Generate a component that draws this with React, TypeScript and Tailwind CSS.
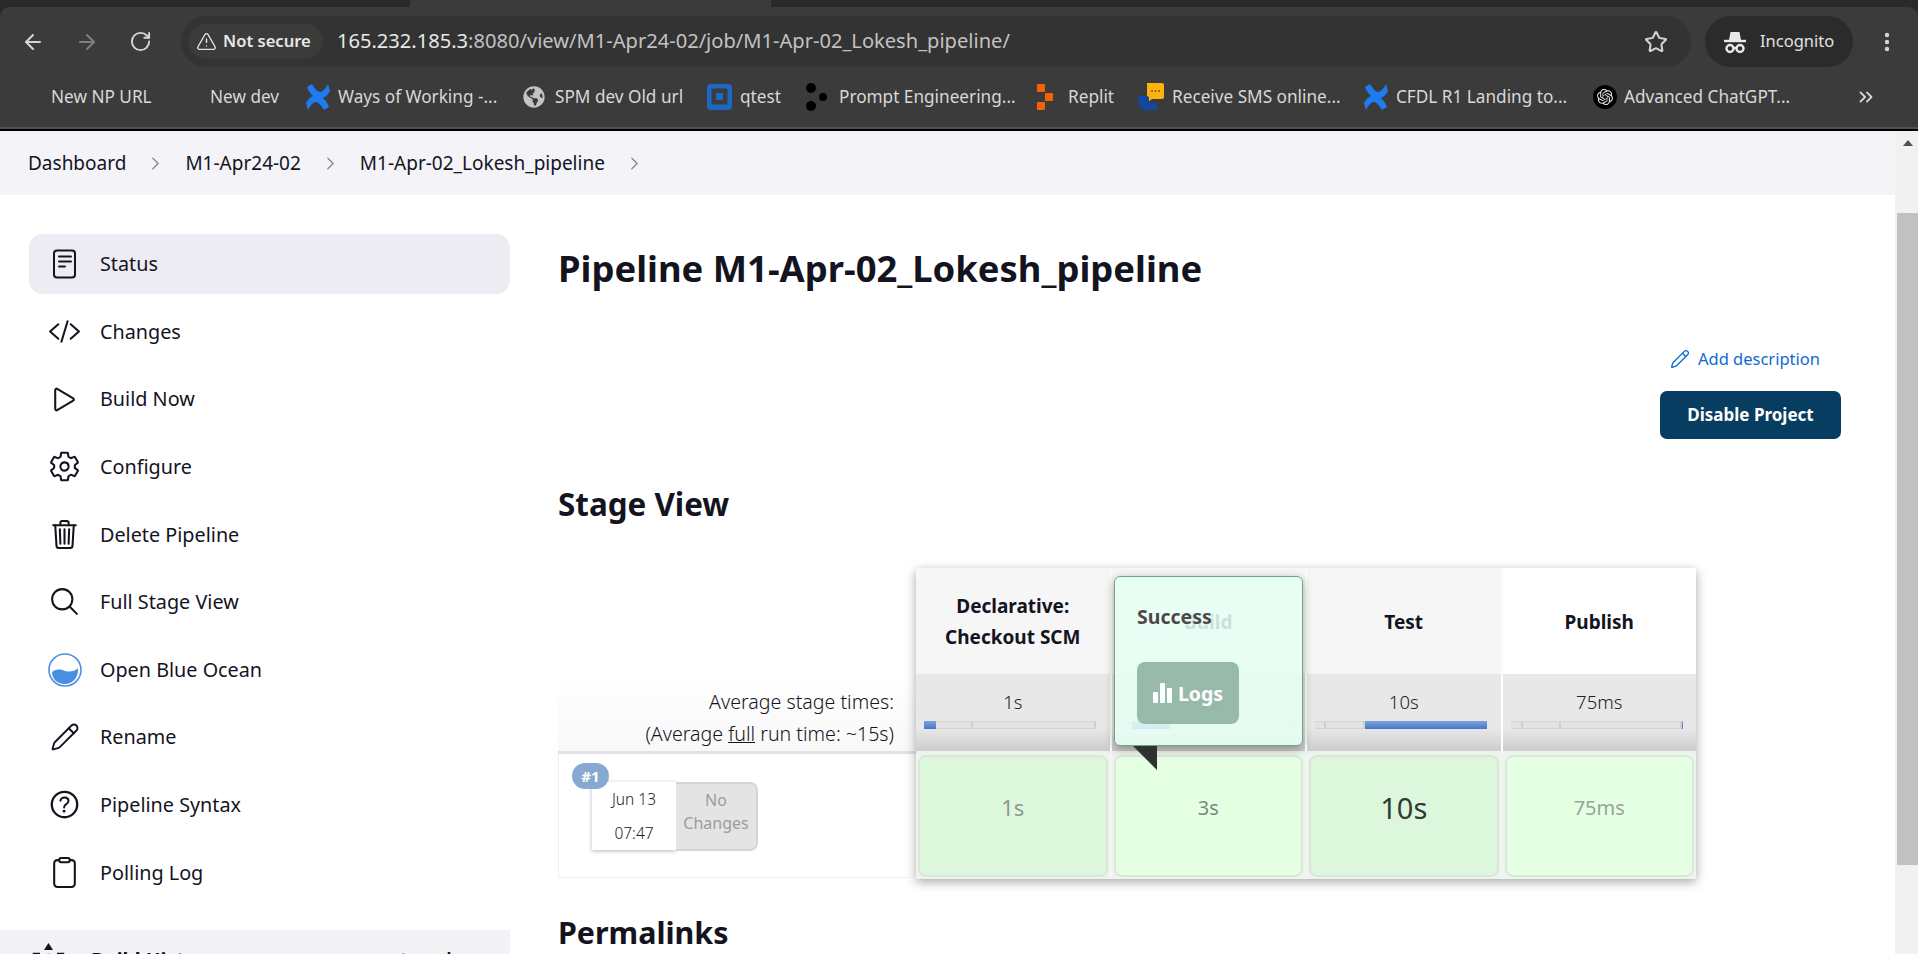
import React from 'react';
import { ArrowLeft, ArrowRight, RotateCw, TriangleAlert, Star, EllipsisVertical, ChevronsRight, ChevronRight, Pencil } from 'lucide-react';
import {
    IoCodeSlashOutline,
    IoPlayOutline,
    IoSettingsOutline,
    IoTrashOutline,
    IoSearchOutline,
    IoHelpCircleOutline,
    IoClipboardOutline,
} from 'react-icons/io5';
import { FaGlobeAmericas } from 'react-icons/fa';
import { SiOpenai } from 'react-icons/si';

const ConfluenceIcon = () => (
    <svg width="24" height="28" viewBox="0 0 24 28" fill="#1e7bf2">
        <path d="M1 4 6 1c3 5 6 8 8 8 3 0 6-4 8-8l2 7c-3 6-8 8-11 8C8 15 3 10 1 4z" />
        <path d="M1 4 6 1c3 5 6 8 8 8 3 0 6-4 8-8l2 7c-3 6-8 8-11 8C8 15 3 10 1 4z" transform="rotate(180 12 14)" />
    </svg>
);

const QtestIcon = () => (
    <svg width="25" height="26" viewBox="0 0 25 26">
        <rect width="25" height="26" rx="4" fill="#1c68c4" />
        <path d="M21 21V6a2 2 0 0 0-2-2H6a2 2 0 0 0-2 2v13a2 2 0 0 0 2 2h15" fill="#3b3b3b" stroke="#1c68c4" strokeWidth="1" />
        <rect x="9" y="9" width="7" height="7" fill="#1c68c4" />
    </svg>
);

const DotsIcon = () => (
    <svg width="22" height="28" viewBox="0 0 22 28" fill="#000">
        <circle cx="6" cy="5" r="5" />
        <circle cx="6" cy="23" r="5" />
        <circle cx="18" cy="14" r="4" />
    </svg>
);

const ReplitIcon = () => (
    <svg width="16" height="26" viewBox="0 0 16 26" fill="#f26207">
        <rect x="0" y="0" width="8" height="8" rx="1" />
        <rect x="8" y="9" width="8" height="8" rx="1" />
        <rect x="0" y="18" width="8" height="8" rx="1" />
    </svg>
);

const SmsIcon = () => (
    <svg width="26" height="28" viewBox="0 0 26 28">
        <path d="M9 0h15a2 2 0 0 1 2 2v12a2 2 0 0 1-2 2H14l-5 4z" fill="#fdb212" />
        <circle cx="14" cy="8" r="1" fill="#7a5600" />
        <circle cx="17.5" cy="8" r="1" fill="#7a5600" />
        <circle cx="21" cy="8" r="1" fill="#7a5600" />
        <rect x="0" y="13" width="11" height="9" rx="2" fill="#13479f" />
        <rect x="3" y="20" width="16" height="7" fill="#13479f" />
    </svg>
);

const IncognitoIcon = () => (
    <svg width="24" height="24" viewBox="0 0 24 24" fill="none" stroke="#e8e8e8" strokeWidth="2.4">
        <path d="M6 10 7.5 2h9L18 10z" fill="#e8e8e8" stroke="none" />
        <path d="M1 11h22" />
        <circle cx="7" cy="18.5" r="3.5" />
        <circle cx="17" cy="18.5" r="3.5" />
        <path d="M10.5 18h3" />
    </svg>
);

const StatusIcon = () => (
    <svg width="25" height="30" viewBox="0 0 25 30" fill="none" stroke="#14141f" strokeWidth="2" strokeLinecap="round">
        <rect x="2" y="1.5" width="21" height="27" rx="3" />
        <path d="M7 7.5h12M7 12.5h12M7 17.5h6" />
    </svg>
);

const OceanIcon = () => (
    <svg width="34" height="34" viewBox="0 0 34 34">
        <circle cx="17" cy="17" r="16" fill="#fff" stroke="#4a90e2" strokeWidth="1.6" />
        <path d="M4 19c4-3 8-3 13-1 4 1 9 1 13-3 1 9-5 16-13 16S4 26 4 19z" fill="#4a90e2" />
    </svg>
);

const BarsIcon = () => (
    <svg width="19" height="20" viewBox="0 0 19 20" fill="#fff">
        <rect x="0" y="9" width="5" height="11" rx="1" />
        <rect x="7" y="0" width="5" height="20" rx="1" />
        <rect x="14" y="5" width="5" height="15" rx="1" />
    </svg>
);

const HistoryIcon = () => (
    <svg width="33" height="24" viewBox="0 0 33 24" fill="none" stroke="#14141f" strokeWidth="2.4">
        <polygon points="16.5,0 21,7 12,7" fill="#14141f" stroke="none" />
        <path d="M8 11H2v12M25 11h6v12" />
        <circle cx="16.5" cy="20" r="8" />
    </svg>
);

const bookmarks = [
    { label: 'New NP URL', icon: null, cls: 'w-[210px] pl-[51px]' },
    { label: 'New dev', icon: null, cls: 'w-[96px]' },
    { label: 'Ways of Working -...', icon: <ConfluenceIcon />, cls: 'w-[217px] gap-[8px]' },
    { label: 'SPM dev Old url', icon: <FaGlobeAmericas size={22} color="#c4c4c4" />, cls: 'w-[184px] gap-[10px]' },
    { label: 'qtest', icon: <QtestIcon />, cls: 'w-[98px] gap-[8px]' },
    { label: 'Prompt Engineering...', icon: <DotsIcon />, cls: 'w-[232px] gap-[12px]' },
    { label: 'Replit', icon: <ReplitIcon />, cls: 'w-[101px] gap-[15px]' },
    { label: 'Receive SMS online...', icon: <SmsIcon />, cls: 'w-[226px] gap-[8px]' },
    { label: 'CFDL R1 Landing to...', icon: <ConfluenceIcon />, cls: 'w-[229px] gap-[8px]' },
];

const navItems = [
    { label: 'Status', icon: <StatusIcon />, active: true },
    { label: 'Changes', icon: <IoCodeSlashOutline size={33} /> },
    { label: 'Build Now', icon: <IoPlayOutline size={33} /> },
    { label: 'Configure', icon: <IoSettingsOutline size={33} /> },
    { label: 'Delete Pipeline', icon: <IoTrashOutline size={33} /> },
    { label: 'Full Stage View', icon: <IoSearchOutline size={33} /> },
    { label: 'Open Blue Ocean', icon: <OceanIcon /> },
    { label: 'Rename', icon: <Pencil size={30} strokeWidth={1.5} /> },
    { label: 'Pipeline Syntax', icon: <IoHelpCircleOutline size={37} /> },
    { label: 'Polling Log', icon: <IoClipboardOutline size={33} /> },
];

// widths in px of each piece of the little timing bar
const stages = [
    {
        name: ['Declarative:', 'Checkout SCM'],
        avg: '1s',
        headBg: 'bg-[#f6f6f6]',
        bar: [{ w: 12, blue: true }, { w: 37 }, { w: 123 }],
        cell: '1s',
        cellBg: 'bg-[#ddf7dc]',
        cellText: 'text-[22px] text-[#8a9a8c]',
    },
    {
        name: ['Build'],
        avg: '3s',
        headBg: 'bg-[#f6f6f6]',
        bar: [{ w: 12 }, { w: 38, blue: true }, { w: 122 }],
        cell: '3s',
        cellBg: 'bg-[#e5ffe3]',
        cellText: 'text-[20px] text-[#7b8a7d]',
    },
    {
        name: ['Test'],
        avg: '10s',
        headBg: 'bg-[#f6f6f6]',
        bar: [{ w: 11 }, { w: 39 }, { w: 122, blue: true }],
        cell: '10s',
        cellBg: 'bg-[#ddf7dc]',
        cellText: 'text-[29px] text-[#333a35]',
    },
    {
        name: ['Publish'],
        avg: '75ms',
        headBg: 'bg-white',
        bar: [{ w: 12 }, { w: 38 }, { w: 121 }, { w: 1, blue: true }],
        cell: '75ms',
        cellBg: 'bg-[#e5ffe3]',
        cellText: 'text-[20px] text-[#97a698]',
    },
];

const TimingBar = ({ parts }: { parts: { w: number; blue?: boolean }[] }) => (
    <div className="flex h-[8px] w-[172px] bg-[#e2e2e2]">
        {parts.map((p, i) => (
            <div
                key={i}
                style={{ width: p.w }}
                className={
                    p.blue
                        ? 'h-full bg-gradient-to-b from-[#7ea3dc] to-[#4674c8]'
                        : 'h-full bg-[#e2e2e2] border-y border-[#d4d4d4] border-r-2 border-r-[#cfcfcf]'
                }
            />
        ))}
    </div>
);

const Crumb = () => <ChevronRight className="mx-[19px]" size={21} color="#85858d" strokeWidth={1.5} />;

const BrowserChrome = () => (
    <div className="shrink-0 bg-[#292929] text-[#e4e4e4]">
        <div className="h-[7px] flex">
            <div className="ml-[410px] w-[361px] bg-[#3b3b3b]" />
        </div>
        <div className="h-[120px] bg-[#3b3b3b] rounded-t-[10px]">
            <div className="flex items-center h-[60px] pt-[9px]">
                <div className="flex items-center w-[181px] pl-[21px] gap-[30px]">
                    <ArrowLeft size={24} color="#d6d6d6" strokeWidth={2} />
                    <ArrowRight size={24} color="#7f7f7f" strokeWidth={2} />
                    <RotateCw size={23} color="#d6d6d6" strokeWidth={2} />
                </div>
                <div className="flex items-center w-[1510px] h-[51px] rounded-full bg-[#333333] pl-[7px] pr-[23px]">
                    <div className="flex items-center gap-[6px] h-[35px] w-[135px] pl-[8px] rounded-full bg-[#3b3b3b] shrink-0">
                        <TriangleAlert size={21} color="#e4e4e4" strokeWidth={1.6} />
                        <span className="text-[16.6px] font-semibold text-[#e8e8e8] whitespace-nowrap">Not secure</span>
                    </div>
                    <div className="ml-[14px] flex-1 text-[20.1px] text-[#e8e8e8]">
                        165.232.185.3<span className="text-[#c2c2c2]">:8080/view/M1-Apr24-02/job/M1-Apr-02_Lokesh_pipeline/</span>
                    </div>
                    <Star size={24} color="#d6d6d6" strokeWidth={2} />
                </div>
                <div className="ml-[14px] flex items-center gap-[13px] w-[148px] h-[51px] rounded-full bg-[#2b2b2b] pl-[18px]">
                    <IncognitoIcon />
                    <span className="text-[16.5px] text-[#e0e0e0]">Incognito</span>
                </div>
                <EllipsisVertical className="ml-[22px]" size={24} color="#d6d6d6" strokeWidth={2.4} />
            </div>
            <div className="flex items-center h-[60px] text-[17.2px] text-[#d8d8d8]">
                {bookmarks.map((b) => (
                    <div key={b.label} className={`flex items-center shrink-0 whitespace-nowrap ${b.cls}`}>
                        {b.icon}
                        <span>{b.label}</span>
                    </div>
                ))}
                <div className="flex items-center gap-[7px] w-[262px] shrink-0 whitespace-nowrap">
                    <span className="flex items-center justify-center w-[24px] h-[24px] rounded-full bg-black">
                        <SiOpenai size={16} color="#e8e8e8" />
                    </span>
                    <span>Advanced ChatGPT...</span>
                </div>
                <ChevronsRight size={22} color="#d8d8d8" />
            </div>
        </div>
        <div className="h-[2px] bg-[#505050]" />
        <div className="h-[2px] bg-black" />
    </div>
);

const Breadcrumbs = () => (
    <div className="flex items-center h-[64px] shrink-0 bg-[#f3f3f8] pl-[28px] text-[19px] text-[#14141f]">
        <span>Dashboard</span>
        <Crumb />
        <span>M1-Apr24-02</span>
        <Crumb />
        <span>M1-Apr-02_Lokesh_pipeline</span>
        <Crumb />
    </div>
);

const Sidebar = () => (
    <aside className="w-[558px] shrink-0 flex flex-col pt-[39px]">
        <nav className="flex flex-col gap-[7.6px] pl-[29px] pr-[48px]">
            {navItems.map((item) => (
                <div
                    key={item.label}
                    className={`flex items-center h-[60px] rounded-[14px] text-[19.8px] text-[#14141f] ${item.active ? 'bg-[#edecf2]' : ''}`}
                >
                    <span className="flex items-center justify-center w-[71px] text-[#14141f]">{item.icon}</span>
                    <span>{item.label}</span>
                </div>
            ))}
        </nav>
        <div className="mt-[28px] mr-[48px] h-[60px] bg-[#f2f2f7] flex items-start pl-[32px] pt-[13px]">
            <HistoryIcon />
            <div className="ml-[26px] mt-[2px] text-[19.5px] font-bold text-[#14141f] whitespace-nowrap">Build History</div>
            <div className="ml-[183px] mt-[2px] text-[19.5px] font-semibold text-[#14141f]">trend</div>
        </div>
    </aside>
);

const StageView = () => (
    <div className="flex mt-[42px] relative">
        <div className="w-[358px] shrink-0 flex flex-col">
            <div className="h-[106px]" />
            <div className="h-[77px] pr-[22px] pt-[12px] text-right text-[19.6px] font-light leading-[32px] text-[#14141f] bg-gradient-to-b from-white to-[#f8f8f8]">
                <div>Average stage times:</div>
                <div>
                    (Average <span className="underline">full</span> run time: ~15s)
                </div>
            </div>
            <div className="h-[3px] bg-[#e2e2e2]" />
            <div className="relative h-[124px] border-l border-b border-[#eeeeee]">
                <div className="absolute left-[13px] top-[9px] z-10 flex items-center justify-center w-[37px] h-[26px] rounded-full bg-[#86a9d2] text-white text-[15px] font-bold">
                    #1
                </div>
                <div className="flex ml-[33px] mt-[28px]">
                    <div className="w-[84px] h-[68px] bg-white shadow-[0_1px_4px_rgba(0,0,0,0.3)] flex flex-col items-center justify-center gap-[10px] text-[15.5px] leading-[24px] font-light text-[#222]">
                        <span>Jun 13</span>
                        <span>07:47</span>
                    </div>
                    <div className="w-[82px] h-[69px] bg-[#e4e4e4] border-2 border-l-0 border-[#d5d5d5] rounded-r-[8px] flex flex-col items-center justify-center pb-[10px] text-center text-[16px] leading-[23px] text-[#9c9c9c]">
                        <span>No</span>
                        <span>Changes</span>
                    </div>
                </div>
            </div>
        </div>

        <div className="w-[780px] shrink-0 shadow-[0_3px_10px_rgba(0,0,0,0.35)]">
            <div className="grid grid-cols-4 h-[106px] gap-x-[2px] bg-[#fbfbfb]">
                {stages.map((s) => (
                    <div key={s.avg} className={`flex flex-col items-center justify-center pt-[2px] font-bold text-[19px] leading-[31px] text-[#14141f] ${s.headBg}`}>
                        {s.name.map((line) => (
                            <span key={line}>{line}</span>
                        ))}
                    </div>
                ))}
            </div>
            <div className="grid grid-cols-4 h-[77px] gap-x-[2px] bg-white">
                {stages.map((s) => (
                    <div key={s.avg} className="flex flex-col pt-[13px] bg-gradient-to-b from-[#e8e8e8] from-70% to-[#cdcdcd]">
                        <span className="text-center text-[18.5px] leading-[30px] font-light text-[#222]">{s.avg}</span>
                        <div className="mt-[4px] ml-[8px]">
                            <TimingBar parts={s.bar} />
                        </div>
                    </div>
                ))}
            </div>
            <div className="grid grid-cols-4 h-[128px] gap-x-[2px] bg-[#f2f7f2]">
                {stages.map((s) => (
                    <div key={s.avg} className="px-[2px] pt-[4px] pb-[2px] bg-[#ecf5ec]">
                        <div className={`h-full rounded-[8px] border-2 border-[#dde5dc] flex items-center justify-center pb-[17px] ${s.cellBg} ${s.cellText}`}>
                            {s.cell}
                        </div>
                    </div>
                ))}
            </div>
        </div>

        {/* Hover popup over the Build column */}
        <div className="absolute left-[556px] top-[8px] z-20 w-[189px] h-[170px] rounded-[6px] border border-[#6ea87e] bg-[#e6fff5]/[0.87] shadow-[0_3px_10px_rgba(0,0,0,0.35)] pl-[22px]">
            <div className="mt-[25px] text-[19.5px] font-bold text-[#4a4a4a] [text-shadow:0_0_3px_#fff]">Success</div>
            <div className="mt-[31px] flex items-center justify-center gap-[6px] w-[102px] h-[62px] rounded-[8px] bg-[#8aae9e]/[0.85] text-[19.5px] font-bold text-white">
                <BarsIcon />
                <span>Logs</span>
            </div>
        </div>
        <svg className="absolute left-[575px] top-[178px] z-20" width="24" height="24" viewBox="0 0 24 24">
            <polygon points="0,0 24,0 24,24" fill="#2f332f" />
        </svg>
    </div>
);

const MainContent = () => (
    <main className="flex-1 min-w-0 pt-[49px] pr-[54px] text-[#14141f]">
        <h1 className="text-[36.4px] leading-[48px] font-bold whitespace-nowrap">Pipeline M1-Apr-02_Lokesh_pipeline</h1>
        <div className="flex flex-col items-end">
            <div className="mt-[52px] flex items-center gap-[8px] h-[30px] pr-[21px] text-[#0b6bd4] text-[16.5px]">
                <Pencil size={20} strokeWidth={1.6} />
                <span>Add description</span>
            </div>
            <button className="mt-[17px] w-[181px] h-[48px] rounded-[7px] bg-[#063d60] text-white text-[17px] font-bold">
                Disable Project
            </button>
        </div>
        <h2 className="mt-[43px] text-[31.4px] leading-[44px] font-bold">Stage View</h2>
        <StageView />
        <h2 className="mt-[32px] text-[30.4px] leading-[44px] font-bold">Permalinks</h2>
    </main>
);

const Scrollbar = () => (
    <div className="w-[23px] shrink-0 bg-[#f1f1f1] flex flex-col items-end">
        <div className="w-[21px] flex justify-center pt-[9px] h-[82px]">
            <div className="w-0 h-0 border-x-[5px] border-x-transparent border-b-[6px] border-b-[#505050]" />
        </div>
        <div className="w-[21px] h-[652px] bg-[#c1c1c1]" />
    </div>
);

export default function App() {
    return (
        <div className="h-[954px] w-[1918px] overflow-hidden flex flex-col bg-white font-['Noto_Sans','Open_Sans',sans-serif]">
            <BrowserChrome />
            <div className="flex flex-1 min-h-0">
                <div className="flex-1 min-w-0 flex flex-col">
                    <Breadcrumbs />
                    <div className="flex flex-1 min-h-0 overflow-hidden">
                        <Sidebar />
                        <MainContent />
                    </div>
                </div>
                <Scrollbar />
            </div>
        </div>
    );
}
